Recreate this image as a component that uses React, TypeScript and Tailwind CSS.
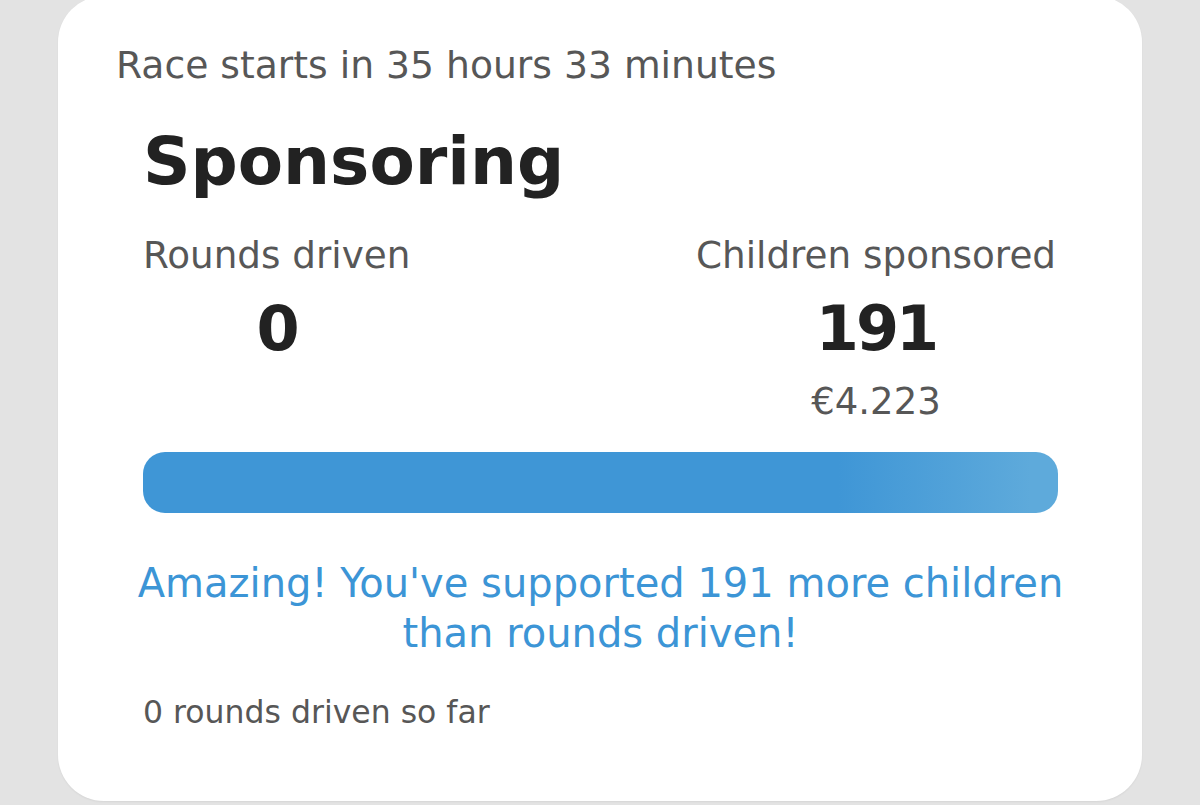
const font = { fontFamily: '"DejaVu Sans", Verdana, sans-serif' };

function Stat({ label, value, sub }: { label: string; value: string; sub?: string }) {
  return (
    <div className="flex flex-col items-center">
      <div className="text-[37.3px] leading-[44px] text-[#575757]">{label}</div>
      <div className="mt-[17px] text-[62px] font-bold leading-[70px] tracking-[-3px] text-[#222222]">{value}</div>
      {sub && <div className="mt-[16px] text-[37px] leading-[44px] text-[#575757]">{sub}</div>}
    </div>
  );
}

export default function App() {
  return (
    <div className="h-[805px] w-[1200px] overflow-hidden bg-[#e3e3e3] px-[58px]" style={font}>
      <div className="-mt-[4px] h-[805px] rounded-[46px] bg-white pt-[47px] shadow-[0_1px_2px_rgba(0,0,0,0.06)]">
        <p className="pl-[58px] text-[37.7px] leading-[44px] text-[#575757]">
          Race starts in 35 hours 33 minutes
        </p>

        <div className="mt-[37px] pl-[85px] pr-[84px]">
          <h1 className="text-[66px] font-bold leading-[76px] text-[#222222]">Sponsoring</h1>

          <div className="mt-[33px] flex items-start justify-between pr-[2px]">
            <Stat label="Rounds driven" value="0" />
            <Stat label="Children sponsored" value="191" sub="€4.223" />
          </div>

          <div className="mt-[28px] h-[61px] rounded-[22px] bg-[linear-gradient(to_right,#3f96d6_0%,#3f96d6_76%,#5eaadb_97%,#5eaadb_100%)]" />

          <p className="-mx-[6px] mt-[45px] text-center text-[40px] leading-[50px] text-[#3c95d6]">
            Amazing! You've supported 191 more children
            <br />
            than rounds driven!
          </p>

          <p className="mt-[35px] text-[31.5px] leading-[38px] text-[#575757]">0 rounds driven so far</p>
        </div>
      </div>
    </div>
  );
}
